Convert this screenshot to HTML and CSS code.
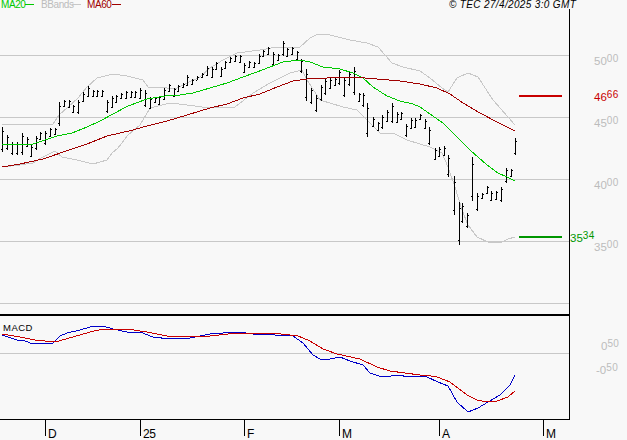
FILE: index.html
```html
<!DOCTYPE html>
<html lang="en">
<head>
<meta charset="utf-8">
<title>Chart</title>
<link rel="stylesheet" href="styles.css">
</head>
<body>
<svg class="chart" width="627" height="440" viewBox="0 0 627 440" xmlns="http://www.w3.org/2000/svg">
  <g class="grid">
    <path d="M0 55.5H569M0 117.5H569M0 179.5H569M0 241.5H569M0 303.5H569M0 353.5H569"/>
  </g>
  <g class="frame">
    <path d="M569.5 9V420M0 419.5H570M45.5 420V436M140.5 420V436M244.5 420V436M339.5 420V436M439.5 420V436M543.5 420V436"/>
    <path class="thick" d="M0 315H570"/>
  </g>

  <polyline class="ln band" points="2,124 53,124 59,115 67,108 78,98 87,87 97,78 113,74 127,76 143,80 148,87 167,88 177,88 187,83 200,77 210,68 223,60 237,53 260,50 277,47 300,47 310,38 318,34 330,35 350,40 367,43 378,47 392,63 403,67 420,71 430,78 442,88 448,92 457,78 468,73 478,77 493,100 508,117 515,125"/>
  <polyline class="ln band" points="2,167 20,165 33,163 43,157 55,151 62,157 77,160 93,164 107,160 112,153 118,148 128,135 140,125 150,108 170,103 187,105 210,108 235,107 253,93 270,83 290,73 302,70 307,80 320,100 343,107 357,110 367,120 380,133 393,133 407,140 420,144 430,147 442,153 448,167 455,187 462,210 468,225 477,237 488,242 500,243 508,239 515,237"/>

  <path id="bars" class="bars" d=""/>

  <polyline class="ln ma20" points="2,145 33,144 57,136 72,133 87,127 100,121 113,114 128,106 147,99 165,96 180,95 193,93 210,88 227,83 243,77 257,72 270,67 283,62 300,60 310,62 323,67 340,69 353,73 363,78 373,87 387,96 400,101 413,104 420,107 430,114 443,123 455,135 470,150 487,165 498,173 507,177 515,181"/>
  <polyline class="ln ma60" points="2,167 20,164 43,159 72,149 87,144 107,136 133,130 147,126 167,121 187,115 210,108 227,104 243,98 260,94 277,87 293,81 307,79 327,78 353,77 377,79 400,81 420,84 437,88 450,94 463,103 480,113 497,122 515,131"/>

  <polyline class="ln macd" points="2,335 17,340 25,341 33,344 53,343 60,336 67,333 80,330 90,327 103,326 113,329 127,332 140,332 153,337 170,339 190,338 200,336 210,334 223,333 238,332 253,334 275,335 293,336 303,343 313,355 320,359 330,359 340,357 350,361 363,365 370,373 382,377 400,375 407,377 420,376 427,377 438,382 448,386 457,402 468,412 478,408 488,402 500,395 510,385 515,375"/>
  <polyline class="ln signal" points="2,334 20,337 35,340 55,342 73,337 90,332 103,329 127,329 147,332 167,336 190,337 210,336 237,333 273,333 298,336 310,341 323,349 337,354 360,359 377,367 390,371 420,375 425,375 437,377 450,382 467,395 477,400 487,402 497,401 508,397 515,391"/>

  <g class="legend">
    <text class="t-green" x="1" y="8">MA20</text>
    <path class="mark m-green" d="M25 4.5H34"/>
    <text class="t-gray" x="41" y="8">BBands</text>
    <path class="mark m-gray" d="M72 4.5H81"/>
    <text class="t-dark" x="87" y="8">MA60</text>
    <path class="mark m-dark" d="M112 4.5H121"/>
  </g>
  <text class="stamp" x="449" y="8">© TEC 27/4/2025 3:0 GMT</text>
  <text class="label" x="3" y="331">MACD</text>

  <g class="level">
    <path class="lv-red" d="M519 96H562"/>
    <path class="lv-green" d="M519 237H562"/>
  </g>

  <g class="price t-gray">
    <text x="594" y="65">50<tspan class="sup" dy="-3">00</tspan></text>
    <text x="594" y="127">45<tspan class="sup" dy="-3">00</tspan></text>
    <text x="594" y="189">40<tspan class="sup" dy="-3">00</tspan></text>
    <text x="594" y="251">35<tspan class="sup" dy="-3">00</tspan></text>
    <text x="601" y="350">0<tspan class="sup" dy="-3">50</tspan></text>
    <text x="596" y="374">-0<tspan class="sup" dy="-3">50</tspan></text>
  </g>
  <text class="price t-red" x="594" y="101">46<tspan class="sup" dy="-3">66</tspan></text>
  <text class="price t-lv" x="570" y="242">35<tspan class="sup" dy="-3">34</tspan></text>

  <g class="axis">
    <text x="48" y="438">D</text>
    <text class="tight" x="143" y="438">25</text>
    <text x="247" y="438">F</text>
    <text x="342" y="438">M</text>
    <text x="442" y="438">A</text>
    <text x="546" y="438">M</text>
  </g>
</svg>
<script src="chart.js"></script>
</body>
</html>
```

FILE: styles.css
```css
html, body {
  margin: 0;
  padding: 0;
  background: #f8f8f8;
}
.chart {
  display: block;
  font-family: "Liberation Sans", Arial, sans-serif;
}
.grid path { fill: none; stroke: #c8c8c8; stroke-width: 1; shape-rendering: crispEdges; }
.frame path { fill: none; stroke: #000; stroke-width: 1; shape-rendering: crispEdges; }
.frame .thick { stroke-width: 2; }
.ln { fill: none; stroke-width: 1; shape-rendering: crispEdges; }
.band { stroke: #c8c8c8; }
.ma20 { stroke: #00c800; }
.ma60 { stroke: #a00000; }
.macd { stroke: #0000c8; }
.signal { stroke: #c80000; }
.bars { fill: none; stroke: #000; stroke-width: 1; shape-rendering: crispEdges; }
.mark { fill: none; stroke-width: 1; shape-rendering: crispEdges; }
.m-green { stroke: #00c800; }
.m-gray { stroke: #c8c8c8; }
.m-dark { stroke: #a00000; }
.legend text { font-size: 10px; letter-spacing: -0.4px; }
.t-green { fill: #00c800; }
.t-gray { fill: #bcbcbc; }
.t-dark { fill: #a00000; }
.t-red { fill: #c80000; }
.t-lv { fill: #009600; }
.stamp { font-size: 10px; font-style: italic; letter-spacing: 0.35px; fill: #000; }
.label { font-size: 9.5px; letter-spacing: 0.5px; fill: #000; }
.price { font-size: 11.5px; }
.price .sup { font-size: 10px; letter-spacing: 0.4px; }
.lv-red, .lv-green { fill: none; stroke-width: 2; shape-rendering: crispEdges; }
.lv-red { stroke: #c80000; }
.lv-green { stroke: #009600; }
.axis text { font-size: 12px; fill: #000; }
.axis .tight { letter-spacing: -0.5px; }
```

FILE: chart.js
```js
// x, high, low for each daily bar
var data = [
  [2,127,152],[7,135,150],[12,142,155],[17,142,155],[22,133,155],[27,137,147],[31,145,157],[36,136,150],
  [40,132,140],[45,131,145],[50,128,137],[55,128,135],[59,102,126],[64,100,107],[69,100,108],[73,105,113],
  [78,100,114],[83,92,102],[88,86,97],[93,90,97],[97,90,97],[102,90,97],[107,100,113],[112,96,108],
  [116,95,103],[121,93,99],[126,91,99],[131,91,98],[135,91,98],[140,88,99],[145,90,107],[150,97,109],
  [155,97,103],[159,96,105],[164,88,100],[169,84,92],[174,88,97],[178,85,92],[183,83,88],[187,75,86],
  [192,79,85],[197,76,80],[202,73,78],[207,66,76],[212,67,78],[216,62,70],[221,67,77],[225,61,69],
  [230,57,63],[235,55,62],[240,55,63],[244,63,73],[249,61,68],[254,62,68],[259,54,64],[263,50,57],
  [268,47,55],[273,52,66],[278,54,61],[283,41,56],[287,48,57],[292,47,55],[297,51,60],[301,59,73],
  [306,69,101],[311,88,104],[316,95,112],[321,85,101],[325,78,95],[330,78,89],[335,78,86],[339,70,85],
  [344,77,97],[349,72,86],[354,67,95],[359,93,102],[363,93,107],[367,103,137],[373,117,127],[378,122,131],
  [382,115,129],[387,110,122],[392,103,123],[397,112,123],[401,112,120],[406,124,137],[411,118,129],[415,118,128],
  [420,114,120],[425,119,129],[429,127,145],[435,148,160],[439,147,157],[444,146,156],[448,155,177],[454,176,215],
  [459,202,245],[462,203,223],[467,213,228],[472,157,201],[477,193,211],[482,193,199],[487,186,194],[491,191,201],
  [496,191,200],[501,187,202],[506,168,183],[511,169,177],[515,138,155]
];
var d = "";
data.forEach(function (b) {
  var x = b[0] + 0.5, hi = b[1], lo = b[2], r = lo - hi;
  var open = Math.round(lo - r * 0.12) + 0.5;
  var close = Math.round(hi + r * 0.15) + 0.5;
  d += "M" + x + " " + hi + "V" + lo;
  d += "M" + (x - 1.5) + " " + open + "h1";
  d += "M" + (x + 0.5) + " " + close + "h1";
});
document.getElementById("bars").setAttribute("d", d);
```
